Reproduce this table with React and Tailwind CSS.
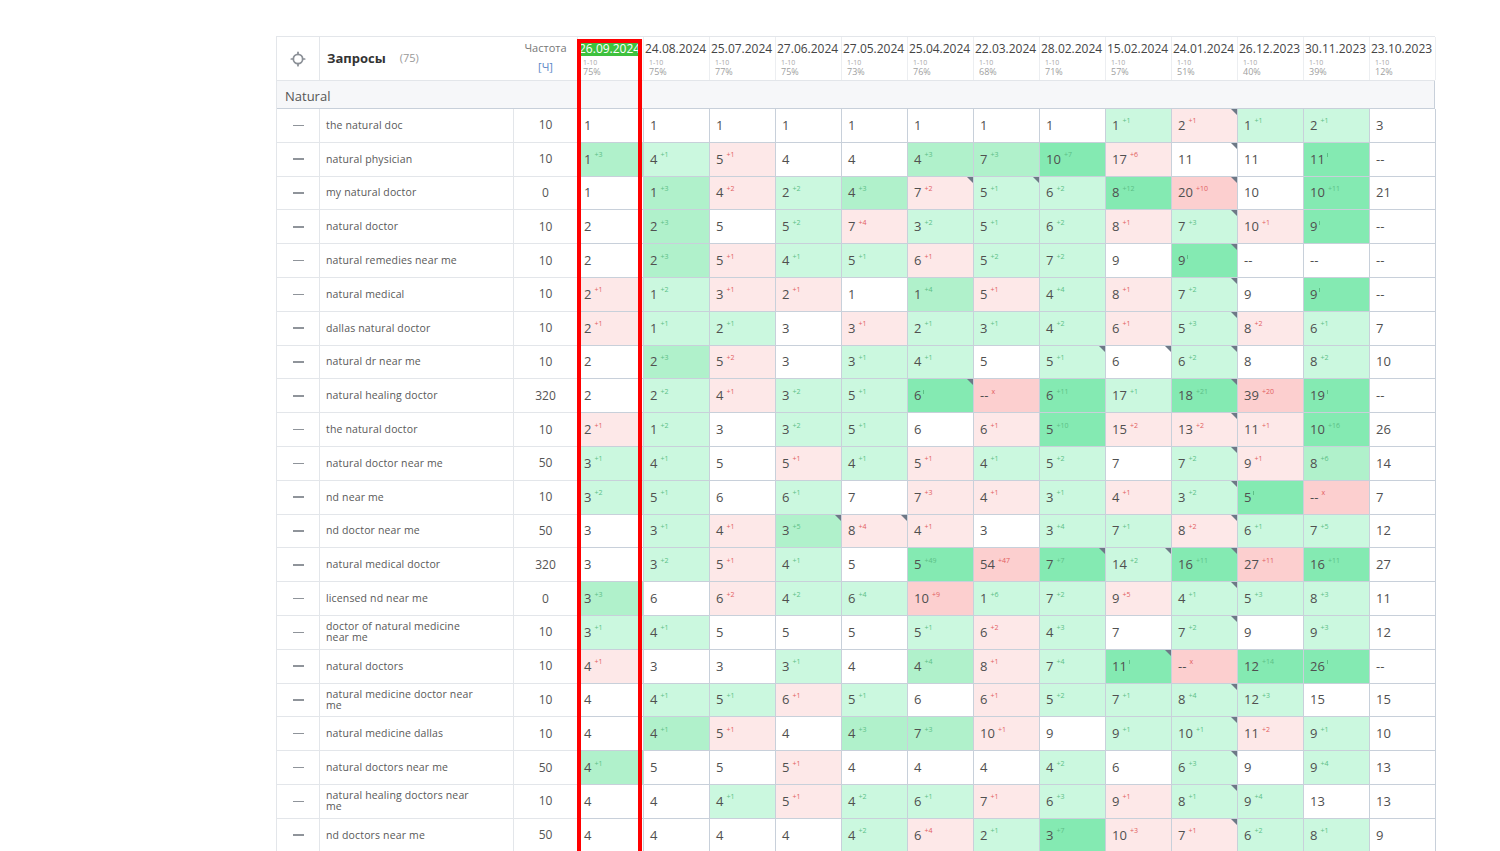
import React from "react";
import { Locate } from "lucide-react";

const DATES = [
  ["26.09.2024", "75%"],
  ["24.08.2024", "75%"],
  ["25.07.2024", "77%"],
  ["27.06.2024", "75%"],
  ["27.05.2024", "73%"],
  ["25.04.2024", "76%"],
  ["22.03.2024", "68%"],
  ["28.02.2024", "71%"],
  ["15.02.2024", "57%"],
  ["24.01.2024", "51%"],
  ["26.12.2023", "40%"],
  ["30.11.2023", "39%"],
  ["23.10.2023", "12%"],
];

const ROWS = [
  [["the natural doc"], "10", "1w 1w 1w 1w 1w 1w 1w 1w 1+1g 2+1r* 1+1g 2+1g 3w"],
  [["natural physician"], "10", "1+3G 4+1g 5+1r 4w 4w 4+3G 7+3G 10+7H 17+6r 11w* 11w 11'H --w"],
  [["my natural doctor"], "0", "1w 1+3G 4+2r 2+2g 4+3G 7+2r* 5+1g* 6+2g 8+12H 20+10R* 10w 10+11H 21w"],
  [["natural doctor"], "10", "2w 2+3G 5w 5+2g 7+4r 3+2g 5+1g 6+2g 8+1r 7+3g* 10+1r 9'H --w"],
  [["natural remedies near me"], "10", "2w 2+3G 5+1r 4+1g 5+1g 6+1r 5+2g 7+2g 9w 9'H* --w --w --w"],
  [["natural medical"], "10", "2+1r 1+2g 3+1r 2+1r 1w 1+4G 5+1r 4+4g 8+1r 7+2g* 9w 9'H --w"],
  [["dallas natural doctor"], "10", "2+1r 1+1g 2+1g 3w 3+1r 2+1g 3+1g 4+2g 6+1r 5+3g* 8+2r 6+1g 7w"],
  [["natural dr near me"], "10", "2w 2+3G 5+2r 3w 3+1g 4+1g 5w 5+1g* 6w* 6+2g* 8w 8+2g 10w"],
  [["natural healing doctor"], "320", "2w 2+2g 4+1r 3+2g 5+1g 6'H* --xR 6+11H 17+1g 18+21H* 39+20R 19'H --w"],
  [["the natural doctor"], "10", "2+1r 1+2g 3w 3+2g 5+1g 6w 6+1r 5+10H 15+2r 13+2r* 11+1r 10+16H 26w"],
  [["natural doctor near me"], "50", "3+1g 4+1g 5w 5+1r 4+1g 5+1r 4+1g 5+2g 7w 7+2g* 9+1r 8+6G 14w"],
  [["nd near me"], "10", "3+2g 5+1g 6w 6+1g 7w 7+3r 4+1r 3+1g 4+1r 3+2g* 5'H --xR 7w"],
  [["nd doctor near me"], "50", "3w 3+1g 4+1r 3+5G* 8+4r* 4+1r 3w 3+4g 7+1g 8+2r* 6+1g 7+5g 12w"],
  [["natural medical doctor"], "320", "3w 3+2g 5+1r 4+1g 5w 5+49H 54+47R 7+7H* 14+2g* 16+11H* 27+11R 16+11H 27w"],
  [["licensed nd near me"], "0", "3+3G 6w 6+2r 4+2g 6+4g 10+9R 1+6g 7+2g 9+5r 4+1g* 5+3g 8+3g 11w"],
  [["doctor of natural medicine", "near me"], "10", "3+1g 4+1g 5w 5w 5w 5+1g 6+2r 4+3g 7w 7+2g* 9w 9+3g 12w"],
  [["natural doctors"], "10", "4+1r 3w 3w 3+1g 4w 4+4G 8+1r 7+4g 11'H* --xR 12+14H 26'H --w"],
  [["natural medicine doctor near", "me"], "10", "4w 4+1g 5+1g 6+1r 5+1g 6w 6+1r 5+2g 7+1g 8+4g* 12+3g 15w 15w"],
  [["natural medicine dallas"], "10", "4w 4+1G 5+1r 4w 4+3G 7+3G 10+1r 9w 9+1g 10+1g* 11+2r 9+1g 10w"],
  [["natural doctors near me"], "50", "4+1G 5w 5w 5+1r 4w 4w 4w 4+2g 6w 6+3g* 9w 9+4g 13w"],
  [["natural healing doctors near", "me"], "10", "4w 4w 4+1g 5+1r 4+2g 6+1g 7+1r 6+3g 9+1r 8+1g* 9+4g 13w 13w"],
  [["nd doctors near me"], "50", "4w 4w 4w 4w 4+2g 6+4r 2+1g 3+7H 10+3r 7+1r* 6+2g 8+1g 9w"],
];

const BG = {
  w: "bg-white",
  g: "bg-[#cbf8df]",
  G: "bg-[#b0f1cb]",
  H: "bg-[#84eab2]",
  r: "bg-[#fde8e8]",
  R: "bg-[#fccfcf]",
};

const GRID = "grid grid-cols-[43px_194px_64px_repeat(13,66px)]";

function parse(tok) {
  const m = tok.match(/^(--|\d+)(?:([+'x])(\d*))?([wgGHrR])(\*)?$/);
  return { v: m[1], s: m[2], d: m[3], c: m[4], t: !!m[5] };
}

function Cell({ tok }) {
  const { v, s, d, c, t } = parse(tok);
  const red = c === "r" || c === "R" || s === "x";
  return (
    <div className={`relative h-full border-r border-b border-[#c8d0da] flex items-center pl-[6px] ${BG[c]}`}>
      <span className="text-[13px] text-[#505050] leading-none">{v}</span>
      {s === "+" && (
        <span className={`ml-[3px] -mt-[9px] text-[7px] leading-none ${red ? "text-[#e2605f]" : "text-[#5cbf86]"}`}>
          {"+" + d}
        </span>
      )}
      {s === "x" && (
        <span className="ml-[3px] -mt-[9px] text-[7px] leading-none text-[#e2605f]">x</span>
      )}
      {s === "'" && (
        <span className="ml-[2px] -mt-[8px] block w-[1px] h-[4px] bg-[#5cbf86]" />
      )}
      {t && (
        <span className="absolute top-0 right-0 w-0 h-0 border-l-[6px] border-l-transparent border-t-[6px] border-t-[#6d7886]" />
      )}
    </div>
  );
}

export default function App() {
  return (
    <div className="w-[1500px] h-[851px] overflow-hidden bg-white font-['Open_Sans',sans-serif]">
      <div className="pl-[276px] pt-[36px]">
        <div className="relative w-[1159px] border-l border-t border-[#e3e6ea]">
          {/* Header */}
          <div className={`${GRID} h-[44px] border-b border-[#e3e6ea]`}>
            <div className="flex items-center justify-center border-r border-[#e3e6ea]">
              <Locate size={16} strokeWidth={2.6} className="text-[#8a8f96]" />
            </div>
            <div className="flex items-center pl-[7px]">
              <span className="text-[13px] font-bold text-[#333]">Запросы</span>
              <span className="ml-[14px] text-[11px] text-[#999]">(75)</span>
            </div>
            <div className="flex flex-col items-center pt-[3px] border-r border-[#eceef1]">
              <span className="text-[11px] text-[#777] leading-[16px]">Частота</span>
              <span className="text-[11px] text-[#5a86c6] leading-[16px] mt-[3px]">[Ч]</span>
            </div>
            {DATES.map(([d, p], i) => (
              <div key={d} className="flex flex-col pt-[4px] pl-[1px] border-r border-[#eceef1] overflow-hidden">
                <span
                  className={`text-[12px] leading-[15px] whitespace-nowrap w-fit ${
                    i === 0 ? "bg-[#3ec13e] text-white" : "text-[#444]"
                  }`}
                >
                  {d}
                </span>
                <span className="mt-[3px] pl-[4px] text-[7px] leading-[8px] text-[#a8a8a8]">1-10</span>
                <span className="pl-[4px] text-[9px] leading-[9px] text-[#a0a0a0]">{p}</span>
              </div>
            ))}
          </div>

          {/* Group row */}
          <div className="h-[28px] bg-[#f6f7f9] flex items-center pt-[5px] pl-[8px] border-b border-r border-[#c8d0da]">
            <span className="text-[13px] text-[#555]">Natural</span>
          </div>

          {/* Data rows */}
          {ROWS.map(([q, f, cells], ri) => (
            <div key={ri} className={`${GRID} h-[33.8px]`}>
              <div className="flex items-center justify-center border-r border-b border-[#e3e6ea]">
                <span className="block w-[11px] h-[1.5px] bg-[#8f949a]" />
              </div>
              <div className="flex flex-col justify-center pl-[6px] border-r border-b border-[#e3e6ea] text-[10.5px] leading-[11px] tracking-[0.15px] text-[#595959]">
                {q.map((l) => (
                  <span key={l} className="whitespace-nowrap">{l}</span>
                ))}
              </div>
              <div className="flex items-center justify-center border-r border-b border-[#e3e6ea] text-[12px] text-[#555]">
                {f}
              </div>
              {cells.split(" ").map((tok, ci) => (
                <Cell key={ci} tok={tok} />
              ))}
            </div>
          ))}

          {/* Red annotation frame */}
          <div className="absolute left-[300px] top-[2px] w-[65px] h-[900px] border-4 border-[#ff0000] pointer-events-none" />
        </div>
      </div>
    </div>
  );
}
